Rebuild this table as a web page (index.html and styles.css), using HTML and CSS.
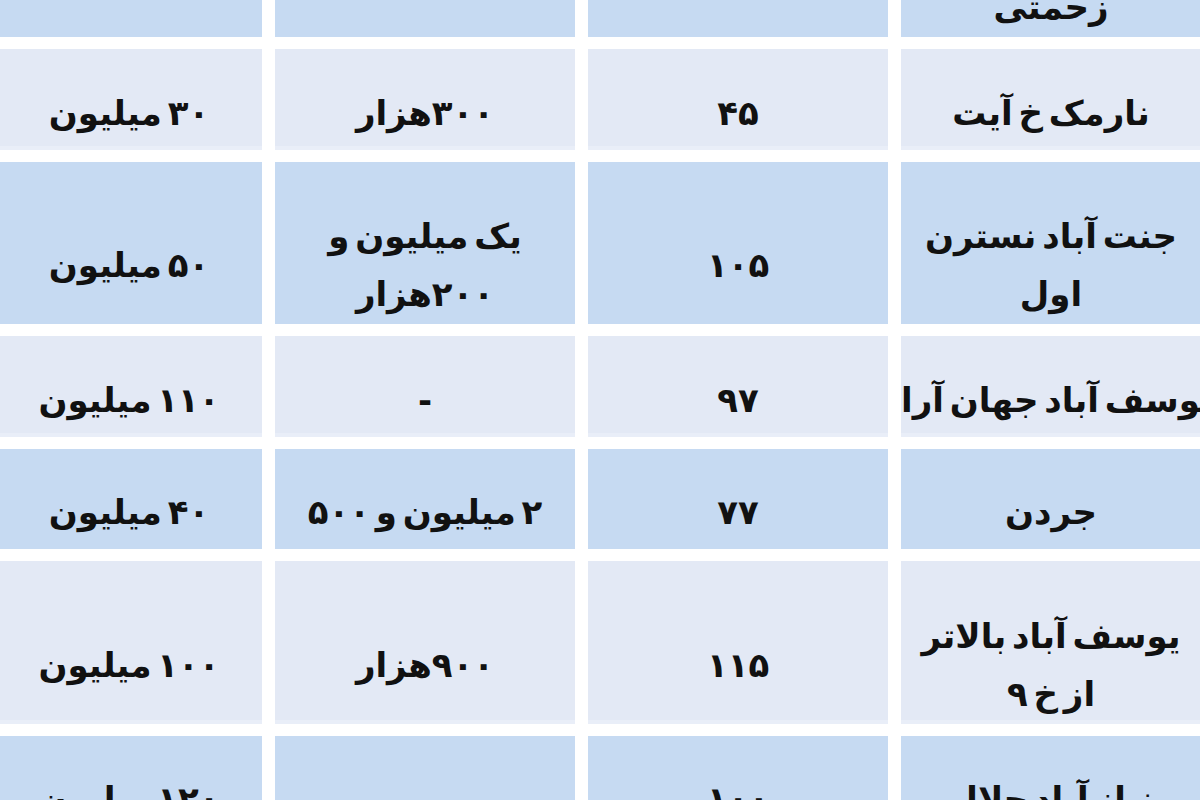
FILE: index.html
```html
<!DOCTYPE html>
<html lang="fa">
<head>
<meta charset="utf-8">
<title>جدول قیمت</title>
<link rel="stylesheet" href="styles.css">
</head>
<body>
<div class="sheet" dir="rtl">
  <div class="cell dark tall">نارمک خ<br>زحمتی</div>
  <div class="cell dark tall">۷۰</div>
  <div class="cell dark tall">۵۰۰هزار</div>
  <div class="cell dark tall">۶۵ میلیون</div>

  <div class="cell light">نارمک خ آیت</div>
  <div class="cell light">۴۵</div>
  <div class="cell light">۳۰۰هزار</div>
  <div class="cell light">۳۰ میلیون</div>

  <div class="cell dark tall">جنت آباد نسترن<br>اول</div>
  <div class="cell dark tall">۱۰۵</div>
  <div class="cell dark tall">یک میلیون و<br>۲۰۰هزار</div>
  <div class="cell dark tall">۵۰ میلیون</div>

  <div class="cell light spill">یوسف آباد جهان آرا</div>
  <div class="cell light">۹۷</div>
  <div class="cell light">-</div>
  <div class="cell light">۱۱۰ میلیون</div>

  <div class="cell dark">جردن</div>
  <div class="cell dark">۷۷</div>
  <div class="cell dark">۲ میلیون و ۵۰۰</div>
  <div class="cell dark">۴۰ میلیون</div>

  <div class="cell light tall">یوسف آباد بالاتر<br>از خ ۹</div>
  <div class="cell light tall">۱۱۵</div>
  <div class="cell light tall">۹۰۰هزار</div>
  <div class="cell light tall">۱۰۰ میلیون</div>

  <div class="cell dark">نیاز آباد جلال</div>
  <div class="cell dark">۱۰۰</div>
  <div class="cell dark"></div>
  <div class="cell dark">۱۲۰ میلیون</div>
</div>
</body>
</html>
```

FILE: styles.css
```css
html, body {
  margin: 0;
  padding: 0;
  background: #ffffff;
  overflow: hidden;
  width: 1200px;
  height: 800px;
}

.sheet {
  display: grid;
  grid-template-columns: 300px 300px 300px 266px;
  grid-template-rows: 162px 101px 162px 101px 100px 163px 100px;
  column-gap: 13px;
  row-gap: 12px;
  width: 1205px;
  margin-left: -4px;
  margin-top: -125px;
  font-family: "DejaVu Sans", sans-serif;
  font-size: 34px;
  font-weight: bold;
  word-spacing: -6px;
  color: #111111;
}

.cell {
  display: flex;
  align-items: center;
  justify-content: center;
  text-align: center;
  padding-top: 26px;
  box-sizing: border-box;
  overflow: hidden;
  white-space: nowrap;
  line-height: 58px;
}

.tall {
  padding-top: 44px;
}

.spill {
  justify-content: flex-end;
}

.dark {
  background: #c6daf2;
}

.light {
  background: #e3e9f5;
  box-shadow: inset 0 -4px 0 #e9eef8;
}
```
